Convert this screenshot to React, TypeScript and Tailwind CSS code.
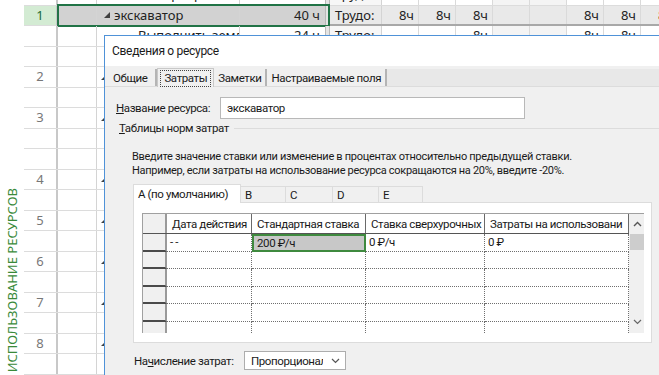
import React from 'react';

type SRow = { kind: 'r' | 'a'; label?: string; name?: string; work?: string; sel?: boolean; ts: string[] };

const E8 = ['', '', '', '', '', '', '', ''];
const sheetRows: SRow[] = [
  { kind: 'a', name: 'Отмаркировать оси', work: '8 ч', ts: ['', '', '8ч', '', '', '', '', ''] },
  { kind: 'r', label: '1', name: 'экскаватор', work: '40 ч', sel: true, ts: ['8ч', '8ч', '8ч', '', '', '8ч', '8ч', '8ч'] },
  { kind: 'a', name: 'Выполнить земляные', work: '24 ч', ts: ['', '', '8ч', '', '', '8ч', '8ч', ''] },
  { kind: 'a', ts: E8 },
  { kind: 'r', label: '2', ts: E8 },
  { kind: 'a', ts: E8 },
  { kind: 'r', label: '3', ts: E8 },
  { kind: 'a', ts: E8 },
  { kind: 'a', ts: E8 },
  { kind: 'r', label: '4', ts: E8 },
  { kind: 'a', ts: E8 },
  { kind: 'r', label: '5', ts: E8 },
  { kind: 'a', ts: E8 },
  { kind: 'r', label: '6', ts: E8 },
  { kind: 'a', ts: E8 },
  { kind: 'r', label: '7', ts: E8 },
  { kind: 'a', ts: E8 },
  { kind: 'r', label: '8', ts: E8 },
  { kind: 'a', ts: E8 },
];

function Tri() {
  return (
    <svg width="6" height="6" viewBox="0 0 6 6" className="shrink-0">
      <polygon points="6,0 6,6 0,6" fill="#404040" />
    </svg>
  );
}

function SheetRow({ r }: { r: SRow }) {
  const sel = !!r.sel;
  return (
    <div className="relative flex h-[20.5px] shrink-0 border-b border-[#dcdcdc] text-[13px] text-[#222]">
      <div
        className={
          'w-[34px] shrink-0 flex items-center justify-center border-r-2 border-[#c8c8c8] ' +
          (sel ? 'bg-[#d3ebd3] text-[#1e6b35]' : 'text-[#777]')
        }
      >
        {r.label}
      </div>
      <div className={'w-[39px] shrink-0 border-r border-[#d4d4d4] ' + (sel ? 'bg-[#d2d2d2]' : '')} />
      <div
        className={
          'w-[143px] shrink-0 flex items-center overflow-hidden whitespace-nowrap border-r border-[#d4d4d4] ' +
          (sel ? 'bg-[#d2d2d2] pl-[7px]' : r.kind === 'r' ? 'pl-[4px]' : 'pl-[41px]')
        }
      >
        {r.kind === 'r' && <Tri />}
        {r.name && <span className={r.kind === 'r' ? 'ml-[4px]' : ''}>{r.name}</span>}
      </div>
      <div className={'w-[85px] shrink-0 flex items-center justify-end pr-[5px] ' + (sel ? 'bg-[#d2d2d2]' : '')}>
        {r.work}
      </div>
      <div className="w-[5px] shrink-0 border-x border-[#b8b8b8] bg-[#e4e4e4]" />
      <div
        className={
          'w-[52px] shrink-0 flex items-center pl-[5px] overflow-hidden whitespace-nowrap border-r border-[#d4d4d4] ' +
          (sel ? 'bg-[#e9e9e9]' : 'bg-[#f7f7f7]')
        }
      >
        Трудо:
      </div>
      {r.ts.map((v, i) => (
        <div
          key={i}
          className={
            'w-[37px] shrink-0 flex items-center justify-end pr-[4px] border-r border-[#dadada] ' +
            (sel ? 'bg-[#e9e9e9]' : i === 3 || i === 4 ? 'bg-[#f4f4f4]' : '')
          }
        >
          {v}
        </div>
      ))}
      {sel && <div className="absolute left-[33px] top-[-1.5px] w-[273px] h-[23px] border-2 border-[#217346]" />}
      {sel && <div className="absolute left-[306px] right-0 bottom-[-1px] h-[2px] bg-[#a8a8a8]" />}
    </div>
  );
}

function ChevUp() {
  return (
    <svg width="9" height="6" viewBox="0 0 9 6">
      <polyline points="1,5 4.5,1.5 8,5" fill="none" stroke="#555" strokeWidth="1.4" />
    </svg>
  );
}
function ChevDown({ c = '#555' }: { c?: string }) {
  return (
    <svg width="9" height="6" viewBox="0 0 9 6">
      <polyline points="1,1 4.5,4.5 8,1" fill="none" stroke={c} strokeWidth="1.2" />
    </svg>
  );
}

const cols = [
  { w: 'w-[85px]', t: 'Дата действия' },
  { w: 'w-[114px]', t: 'Стандартная ставка' },
  { w: 'w-[119px]', t: 'Ставка сверхурочных' },
  { w: 'w-[144px]', t: 'Затраты на использовани' },
];

function RateTable() {
  const body = [0, 1, 2, 3, 4, 5];
  return (
    <div className="flex w-[502px] h-[120px] border-l border-t border-[#a0a0a0] overflow-hidden">
      <div className="flex flex-col w-[486px] shrink-0">
        <div className="flex h-[20px] shrink-0 border-b border-[#555]">
          <div className="w-[24px] shrink-0 bg-[#f0f0f0] border-r-2 border-[#9a9a9a]" />
          {cols.map((c, i) => (
            <div
              key={i}
              className={c.w + ' shrink-0 flex items-center pl-[5px] whitespace-nowrap overflow-hidden border-r border-[#6a6a6a] bg-white'}
            >
              {c.t}
            </div>
          ))}
        </div>
        {body.map((ri) => (
          <div key={ri} className="flex h-[17.5px] shrink-0">
            <div className="w-[24px] shrink-0 bg-[#f0f0f0] border-r-2 border-[#9a9a9a] border-b-2 border-b-[#4a4a4a]" />
            {cols.map((c, i) => {
              const sel = ri === 0 && i === 1;
              const txt = ri === 0 ? ['- -', '200 ₽/ч', '0 ₽/ч', '0 ₽'][i] : '';
              return (
                <div
                  key={i}
                  className={
                    c.w +
                    ' shrink-0 flex items-center whitespace-nowrap overflow-hidden pl-[3px] ' +
                    (sel ? 'bg-[#c8c8c8] border-2 border-[#3f8a3f]' : 'bg-white border-r border-b border-dotted border-[#6f6f6f]')
                  }
                >
                  {txt}
                </div>
              );
            })}
          </div>
        ))}
      </div>
      <div className="w-[16px] shrink-0 bg-[#f0f0f0] flex flex-col items-center">
        <div className="h-[20px] flex items-center justify-center">
          <ChevUp />
        </div>
        <div className="w-[15px] h-[16px] bg-[#cdcdcd]" />
        <div className="flex-1" />
        <div className="h-[14px] flex items-start justify-center">
          <ChevDown c="#666" />
        </div>
      </div>
    </div>
  );
}

export default function App() {
  return (
    <div className="relative w-[659px] h-[375px] overflow-hidden bg-white font-['Noto_Sans',sans-serif] flex">
      <div className="w-[24px] shrink-0 flex flex-col justify-end items-center pb-[3px]">
        <span className="[writing-mode:vertical-rl] rotate-180 text-[13px] leading-none text-[#3a8a3a] whitespace-nowrap">
          ИСПОЛЬЗОВАНИЕ РЕСУРСОВ
        </span>
      </div>
      <div className="flex-1 flex flex-col mt-[-15px]">
        {sheetRows.map((r, i) => (
          <SheetRow key={i} r={r} />
        ))}
      </div>

      {/* Dialog window */}
      <div className="absolute left-[104px] top-[35px] w-[570px] h-[350px] border-l border-t border-[#4f92d8] bg-[#f0f0f0] flex flex-col font-['Roboto',sans-serif] text-[11.5px] tracking-[-0.4px] leading-[14px] text-[#1a1a1a]">
        <div className="h-[30px] shrink-0 bg-white flex items-center pl-[7px] text-[12px] tracking-[-0.3px]">Сведения о ресурсе</div>
        <div className="h-[21px] shrink-0 flex items-end pl-[8px] border-b border-[#dcdcdc]">
          <div className="h-[17px] flex items-center pr-[8px] border-r-2 border-[#b4b4b4] whitespace-nowrap">Общие</div>
          <div className="h-[19px] flex items-center px-[2px] border-x border-t border-[#c8c8c8] bg-[#f0f0f0] mb-[-1px] whitespace-nowrap">
            <span className="border border-dotted border-[#444] px-[3px] leading-[15px]">Затраты</span>
          </div>
          <div className="h-[17px] flex items-center px-[4px] border-r-2 border-[#b4b4b4] whitespace-nowrap">Заметки</div>
          <div className="h-[17px] flex items-center px-[4px] border-r-2 border-[#b4b4b4] whitespace-nowrap">Настраиваемые поля</div>
          <div className="flex-1 h-[17px] bg-[#e8e8e8]" />
        </div>
        <div className="flex items-center mt-[10px] pl-[11px] h-[22px] shrink-0">
          <div className="w-[104px] shrink-0 whitespace-nowrap">
            <span className="underline">Н</span>азвание ресурса:
          </div>
          <div className="w-[305px] h-[22px] bg-white border border-[#b8b8b8] flex items-center pl-[6px]">экскаватор</div>
        </div>
        <div className="flex items-center mt-[1px] pl-[14px] h-[16px] shrink-0">
          <span className="whitespace-nowrap">
            <span className="underline">Т</span>аблицы норм затрат
          </span>
          <div className="flex-1 h-px bg-[#dcdcdc] ml-[5px]" />
        </div>
        <div className="mt-[14px] pl-[27px] text-[11px] tracking-[-0.3px] leading-[14px] whitespace-nowrap shrink-0">
          <div>Введите значение ставки или изменение в процентах относительно предыдущей ставки.</div>
          <div>Например, если затраты на использование ресурса сокращаются на 20%, введите -20%.</div>
        </div>
        <div className="mt-[5px] pl-[28px] flex flex-col shrink-0">
          <div className="flex items-end h-[19px]">
            <div className="w-[108px] h-[19px] bg-white border-x border-t border-[#dcdcdc] flex items-center pl-[4px] mb-[-1px] relative z-10 whitespace-nowrap">
              А (по умолчанию)
            </div>
            <div className="w-[45px] h-[16px] border-r border-t border-[#dcdcdc] flex items-center pl-[4px]">B</div>
            <div className="w-[47px] h-[16px] border-r border-t border-[#dcdcdc] flex items-center pl-[4px]">C</div>
            <div className="w-[46px] h-[16px] border-r border-t border-[#dcdcdc] flex items-center pl-[4px]">D</div>
            <div className="w-[44px] h-[16px] border-r border-t border-[#dcdcdc] flex items-center pl-[4px]">E</div>
          </div>
          <div className="w-[519px] h-[141px] bg-white border border-[#dcdcdc] pt-[10px] pl-[8px]">
            <RateTable />
          </div>
        </div>
        <div className="flex items-center mt-[8px] pl-[29px] shrink-0">
          <div className="w-[110px] shrink-0 whitespace-nowrap">
            На<span className="underline">ч</span>исление затрат:
          </div>
          <div className="w-[102px] h-[19px] bg-white border border-[#adadad] flex items-center pl-[6px] pr-[5px]">
            <span className="w-[72px] overflow-hidden whitespace-nowrap">Пропорциональное</span>
            <div className="ml-auto flex items-center">
              <ChevDown />
            </div>
          </div>
        </div>
      </div>
    </div>
  );
}
